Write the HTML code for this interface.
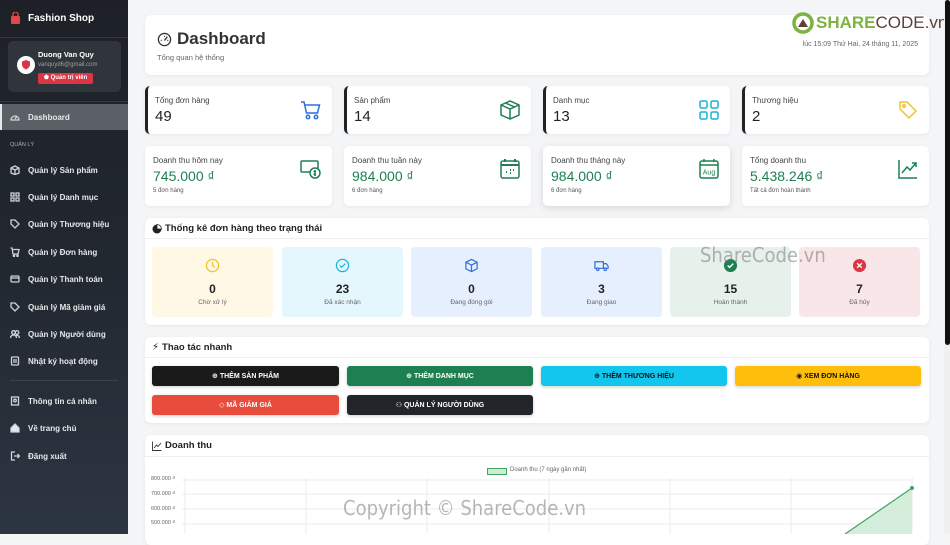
<!DOCTYPE html>
<html><head><meta charset="utf-8"><style>
*{box-sizing:border-box;margin:0;padding:0}
body{width:950px;height:534px;overflow:hidden;background:#f4f5f7;font-family:"Liberation Sans","DejaVu Sans",sans-serif;position:relative;color:#212529}
.sb{position:absolute;left:0;top:0;width:128px;height:534px;background:linear-gradient(180deg,#1d2127 0%,#222830 50%,#2c3542 100%);color:#fff}
.abs{position:absolute}
.card{position:absolute;background:#fff;border-radius:6px;box-shadow:0 1px 4px rgba(0,0,0,.06)}
.nav{position:absolute;left:10px;font-size:8px;font-weight:bold;color:#e6e8eb;display:flex;align-items:center}
.nav svg{width:10px;height:10px;margin-right:8px;stroke:#cfd3d8;fill:none;stroke-width:1.3}
.st{position:absolute;width:187px;height:48px;background:#fff;border-radius:5px;border-left:3px solid #222;box-shadow:0 1px 4px rgba(0,0,0,.06)}
.st .l{position:absolute;left:7px;top:10px;font-size:8px;color:#444}
.st .v{position:absolute;left:7px;top:22px;font-size:15px;color:#222}
.st svg{position:absolute;right:10px;top:13px;width:22px;height:22px;fill:none;stroke-width:1.5}
.rv{position:absolute;width:187px;height:60px;background:#fff;border-radius:5px;box-shadow:0 1px 4px rgba(0,0,0,.06)}
.rv .l{position:absolute;left:8px;top:10px;font-size:8px;color:#444}
.rv .v{position:absolute;left:8px;top:22px;font-size:14px;color:#1e8052}
.rv .s{position:absolute;left:8px;top:42px;font-size:6px;color:#555}
.rv svg{position:absolute;right:10px;top:12px;width:22px;height:22px;fill:none;stroke:#1e8052;stroke-width:1.5}
.bx{position:absolute;top:247px;width:121px;height:70px;border-radius:4px;text-align:center}
.bx svg{position:absolute;left:53px;top:11px;width:15px;height:15px;fill:none;stroke-width:1.3}
.bx .n{position:absolute;left:0;right:0;top:35px;font-size:12px;font-weight:bold;color:#222}
.bx .t{position:absolute;left:0;right:0;top:52px;font-size:6.5px;color:#666}
.btn{position:absolute;width:187px;height:20px;border-radius:3px;color:#fff;font-size:7px;font-weight:bold;display:flex;align-items:center;justify-content:center;box-shadow:0 1px 3px rgba(0,0,0,.2)}
.h{position:absolute;font-size:10px;color:#222;display:flex;align-items:center}
.line{position:absolute;height:1px;background:#eceef0}
.yl{position:absolute;left:151px;font-size:5.5px;color:#666}
.wm{position:absolute;font-size:20px;color:rgba(110,110,110,.5);font-family:"DejaVu Sans Condensed","Liberation Sans Narrow","Liberation Sans",sans-serif}
</style></head><body>
<div class="sb">
 <div class="abs" style="left:10px;top:12px;display:flex;align-items:center;font-weight:bold;font-size:10px"><svg width="11" height="12" viewBox="0 0 11 12"><rect x="1" y="4" width="9" height="8" rx="1" fill="#e34848"/><path d="M3 4V2.5a2.5 2.5 0 0 1 5 0V4" stroke="#e34848" fill="none" stroke-width="1.3"/></svg><span style="margin-left:7px">Fashion Shop</span></div>
 <div class="abs" style="left:0;top:37px;width:128px;height:1px;background:#333a43"></div>
 <div class="abs" style="left:8px;top:41px;width:113px;height:51px;background:#30353c;border-radius:5px">
  <div class="abs" style="left:9px;top:15px;width:18px;height:18px;border-radius:50%;background:#fff"><svg width="18" height="18" viewBox="0 0 18 18"><path d="M9 4l4 1.5v3c0 2.5-2 4-4 5-2-1-4-2.5-4-5v-3z" fill="#dc3545"/></svg></div>
  <div class="abs" style="left:30px;top:9px;font-size:7.5px;font-weight:bold">Duong Van Quy</div>
  <div class="abs" style="left:30px;top:21px;font-size:6px;color:#9aa0a8">vanquyd6@gmail.com</div>
  <div class="abs" style="left:30px;top:32px;width:55px;height:11px;background:#dc3545;border-radius:2px;font-size:6px;font-weight:bold;color:#fff;line-height:11px;text-align:center">⬟ Quản trị viên</div>
 </div>
 <div class="abs" style="left:0;top:101px;width:128px;height:1px;background:#333a43"></div>
 <div class="abs" style="left:0;top:104px;width:128px;height:26px;background:#5b5f66;border-left:2px solid #e8e8e8"></div>
 <div class="nav" style="top:112px"><svg viewBox="0 0 10 10"><path d="M1 8a4 4 0 1 1 8 0z"/><path d="M5 7l2-3"/></svg>Dashboard</div>
 <div class="abs" style="left:10px;top:142px;font-size:5.5px;color:#aab0b8">QUẢN LÝ</div>
 <div class="nav" style="top:165px"><svg viewBox="0 0 10 10"><path d="M1 3l4-2 4 2v5l-4 1.5L1 8z M1 3l4 2 4-2 M5 5v4.5"/></svg>Quản lý Sản phẩm</div>
 <div class="nav" style="top:192px"><svg viewBox="0 0 10 10"><rect x="1" y="1" width="3" height="3"/><rect x="6" y="1" width="3" height="3"/><rect x="1" y="6" width="3" height="3"/><rect x="6" y="6" width="3" height="3"/></svg>Quản lý Danh mục</div>
 <div class="nav" style="top:219px"><svg viewBox="0 0 10 10"><path d="M1 1h4l4 4-4 4-4-4z"/></svg>Quản lý Thương hiệu</div>
 <div class="nav" style="top:247px"><svg viewBox="0 0 10 10"><path d="M0.5 1h1.5l1 6h5l1-4.5H2.5"/><circle cx="4" cy="8.8" r=".7"/><circle cx="7.5" cy="8.8" r=".7"/></svg>Quản lý Đơn hàng</div>
 <div class="nav" style="top:274px"><svg viewBox="0 0 10 10"><rect x="1" y="2" width="8" height="6" rx="1"/><path d="M1 4h8"/></svg>Quản lý Thanh toán</div>
 <div class="nav" style="top:302px"><svg viewBox="0 0 10 10"><path d="M1 1h4l4 4-4 4-4-4z"/></svg>Quản lý Mã giảm giá</div>
 <div class="nav" style="top:329px"><svg viewBox="0 0 10 10"><circle cx="3.5" cy="3.5" r="1.8"/><circle cx="7" cy="3.5" r="1.8"/><path d="M0.5 9c0-2 1.5-3 3-3s3 1 3 3M6 6.2c2 0 3.5 1 3.5 2.8"/></svg>Quản lý Người dùng</div>
 <div class="nav" style="top:356px"><svg viewBox="0 0 10 10"><rect x="1.5" y="1" width="7" height="8" rx="1"/><path d="M3 4h4M3 6h4"/></svg>Nhật ký hoạt động</div>
 <div class="abs" style="left:10px;top:380px;width:108px;height:1px;background:#3a414a"></div>
 <div class="nav" style="top:396px"><svg viewBox="0 0 10 10"><rect x="1.5" y="1" width="7" height="8"/><circle cx="5" cy="4.5" r="1.3"/></svg>Thông tin cá nhân</div>
 <div class="nav" style="top:423px"><svg viewBox="0 0 10 10" style="fill:#e6e8eb"><path d="M1 5l4-4 4 4v4H1z"/></svg>Về trang chủ</div>
 <div class="nav" style="top:451px"><svg viewBox="0 0 10 10"><path d="M5 1H1.5v8H5M4 5h5.5M7.5 3l2 2-2 2"/></svg>Đăng xuất</div>
</div>

<div class="card" style="left:145px;top:15px;width:784px;height:60px">
 <div class="abs" style="left:12px;top:14px;display:flex;align-items:center;font-size:17px;font-weight:bold;color:#333"><svg width="15" height="15" viewBox="0 0 16 16" fill="none" stroke="#333" stroke-width="1.4"><circle cx="8" cy="8" r="6.5"/><path d="M8 9l3-4M4 9h1M11 9h1M8 4v1"/></svg><span style="margin-left:5px">Dashboard</span></div>
 <div class="abs" style="left:12px;top:38px;font-size:7.5px;color:#666">Tổng quan hệ thống</div>
 <div class="abs" style="right:11px;top:26px;font-size:7px;color:#666">lúc 15:09 Thứ Hai, 24 tháng 11, 2025</div>
</div>
<div class="abs" style="left:792px;top:12px;display:flex;align-items:center"><svg width="22" height="22" viewBox="0 0 22 22"><circle cx="11" cy="11" r="9" fill="none" stroke="#7cb342" stroke-width="3.5"/><path d="M6 15l5-8 5 8z" fill="#5d4037"/></svg><span style="font-size:17px;font-weight:bold;color:#7cb342;margin-left:2px">SHARE</span><span style="font-size:17px;color:#5d4037">CODE.vn</span></div>

<div class="st" style="left:145px;top:86px"><div class="l">Tổng đơn hàng</div><div class="v">49</div><svg viewBox="0 0 22 22" stroke="#2f6fdc"><path d="M1 3h3l2.5 11h11l2-8H5"/><circle cx="8" cy="18" r="1.7"/><circle cx="16" cy="18" r="1.7"/></svg></div>
<div class="st" style="left:344px;top:86px"><div class="l">Sản phẩm</div><div class="v">14</div><svg viewBox="0 0 22 22" stroke="#1e8052"><path d="M2 6l9-4 9 4v10l-9 4-9-4z M2 6l9 4 9-4 M11 10v10 M6.5 4l9 4"/></svg></div>
<div class="st" style="left:543px;top:86px"><div class="l">Danh mục</div><div class="v">13</div><svg viewBox="0 0 22 22" stroke="#17b3d6"><rect x="2" y="2" width="7" height="7" rx="1.5"/><rect x="13" y="2" width="7" height="7" rx="1.5"/><rect x="2" y="13" width="7" height="7" rx="1.5"/><rect x="13" y="13" width="7" height="7" rx="1.5"/></svg></div>
<div class="st" style="left:742px;top:86px"><div class="l">Thương hiệu</div><div class="v">2</div><svg viewBox="0 0 22 22" stroke="#f2c12e"><path d="M3 3h7l9 9-7 7-9-9z"/><circle cx="7" cy="7" r="1.3"/></svg></div>

<div class="rv" style="left:145px;top:146px"><div class="l">Doanh thu hôm nay</div><div class="v">745.000 ₫</div><div class="s">5 đơn hàng</div><svg viewBox="0 0 22 22"><rect x="1" y="3" width="17" height="11" rx="1"/><circle cx="15" cy="15" r="5" fill="#fff"/><path d="M15 12v6M13.5 13.5h2.5M13.5 16.5h2.5"/></svg></div>
<div class="rv" style="left:344px;top:146px"><div class="l">Doanh thu tuần này</div><div class="v">984.000 ₫</div><div class="s">6 đơn hàng</div><svg viewBox="0 0 22 22"><rect x="2" y="3" width="18" height="17" rx="2"/><path d="M2 7h18M6 1v3M16 1v3M7 14h1M11 12h1M14 12h1M11 15h1" stroke-width="2"/></svg></div>
<div class="rv" style="left:543px;top:146px;box-shadow:0 2px 8px rgba(0,0,0,.12)"><div class="l">Doanh thu tháng này</div><div class="v">984.000 ₫</div><div class="s">6 đơn hàng</div><svg viewBox="0 0 22 22"><rect x="2" y="3" width="18" height="17" rx="2"/><path d="M2 7h18M6 1v3M16 1v3"/><text x="11" y="16.5" font-size="7" text-anchor="middle" fill="#1e8052" stroke="none" font-family="Liberation Sans">Aug</text></svg></div>
<div class="rv" style="left:742px;top:146px"><div class="l">Tổng doanh thu</div><div class="v">5.438.246 ₫</div><div class="s">Tất cả đơn hoàn thành</div><svg viewBox="0 0 22 22"><path d="M2 2v18h18M5 15l5-6 3 3 6-7M15 5h4v4"/></svg></div>

<div class="card" style="left:145px;top:218px;width:784px;height:107px"></div>
<div class="h" style="left:152px;top:223px;font-weight:bold;font-size:9.5px"><svg width="10" height="10" viewBox="0 0 10 10"><circle cx="5" cy="5" r="4.5" fill="#222"/><path d="M5 5V0.5A4.5 4.5 0 0 1 9.5 5z" fill="#fff" stroke="#222" stroke-width=".8"/></svg><span style="margin-left:3px">Thống kê đơn hàng theo trạng thái</span></div>
<div class="line" style="left:145px;top:238px;width:784px"></div>
<div class="bx" style="left:152px;background:#fff8e5"><svg viewBox="0 0 16 16" stroke="#f2c12e"><circle cx="8" cy="8" r="6.5"/><path d="M8 4v4l2.5 2"/></svg><div class="n">0</div><div class="t">Chờ xử lý</div></div>
<div class="bx" style="left:282px;background:#e4f7fc"><svg viewBox="0 0 16 16" stroke="#17b3d6"><circle cx="8" cy="8" r="6.5"/><path d="M5 8l2 2 4-4"/></svg><div class="n">23</div><div class="t">Đã xác nhận</div></div>
<div class="bx" style="left:411px;background:#e6effd"><svg viewBox="0 0 16 16" stroke="#2f6fdc"><path d="M2 4.5l6-3 6 3v7l-6 3-6-3z M2 4.5l6 3 6-3 M8 7.5v7"/></svg><div class="n">0</div><div class="t">Đang đóng gói</div></div>
<div class="bx" style="left:541px;background:#e6effd"><svg viewBox="0 0 16 16" stroke="#2f6fdc"><path d="M1 4h9v7H1z M10 6h3l2 2.5V11h-5"/><circle cx="4" cy="12" r="1.3" fill="#fff"/><circle cx="12" cy="12" r="1.3" fill="#fff"/></svg><div class="n">3</div><div class="t">Đang giao</div></div>
<div class="bx" style="left:670px;background:#e7f1eb"><svg viewBox="0 0 16 16"><circle cx="8" cy="8" r="7" fill="#1e8052"/><path d="M5 8l2 2 4-4" stroke="#fff" stroke-width="1.6"/></svg><div class="n">15</div><div class="t">Hoàn thành</div></div>
<div class="bx" style="left:799px;background:#f9e6e8"><svg viewBox="0 0 16 16"><circle cx="8" cy="8" r="7" fill="#dc3545"/><path d="M5.5 5.5l5 5M10.5 5.5l-5 5" stroke="#fff" stroke-width="1.4"/></svg><div class="n">7</div><div class="t">Đã hủy</div></div>
<div class="wm" style="left:700px;top:243px">ShareCode.vn</div>

<div class="card" style="left:145px;top:337px;width:784px;height:86px"></div>
<div class="h" style="left:152px;top:342px;font-weight:bold;font-size:9.5px"><span style="font-size:10px">⚡</span><span style="margin-left:3px">Thao tác nhanh</span></div>
<div class="line" style="left:145px;top:357px;width:784px"></div>
<div class="btn" style="left:152px;top:366px;background:#1a1a1a">⊕ THÊM SẢN PHẨM</div>
<div class="btn" style="left:347px;top:366px;background:#1e8052;width:186px">⊕ THÊM DANH MỤC</div>
<div class="btn" style="left:541px;top:366px;background:#13c6ee;width:186px;color:#111">⊕ THÊM THƯƠNG HIỆU</div>
<div class="btn" style="left:735px;top:366px;background:#fdbf0b;width:186px;color:#111">◉ XEM ĐƠN HÀNG</div>
<div class="btn" style="left:152px;top:395px;background:#e74c3c">◇ MÃ GIẢM GIÁ</div>
<div class="btn" style="left:347px;top:395px;background:#22262b;width:186px">⚇ QUẢN LÝ NGƯỜI DÙNG</div>

<div class="card" style="left:145px;top:435px;width:784px;height:110px"></div>
<div class="h" style="left:152px;top:440px;font-size:9.5px;font-weight:bold"><svg width="10" height="10" viewBox="0 0 10 10" fill="none" stroke="#333" stroke-width=".9"><path d="M.5 .5v9h9M2 7l2.5-3 1.5 1.5 3-3.5"/></svg><span style="margin-left:3px">Doanh thu</span></div>
<div class="line" style="left:145px;top:456px;width:784px"></div>
<div class="abs" style="left:487px;top:468px;width:20px;height:7px;background:#cdebd5;border:1.3px solid #3ea45e"></div>
<div class="abs" style="left:510px;top:467px;font-size:6px;color:#666">Doanh thu (7 ngày gần nhất)</div>
<div class="yl" style="top:476px">800.000 ₫</div>
<div class="yl" style="top:491px">700.000 ₫</div>
<div class="yl" style="top:506px">600.000 ₫</div>
<div class="yl" style="top:520px">500.000 ₫</div>
<svg class="abs" style="left:0;top:0" width="950" height="534">
 <g stroke="#e9ebed" stroke-width="1">
  <path d="M182 480H913M182 494H913M182 509H913M182 524H913"/>
  <path d="M185 478V534M306 478V534M427 478V534M549 478V534M670 478V534M791 478V534M912 478V534"/>
 </g>
 <path d="M845 534L912 488V534z" fill="#d4eedb"/>
 <path d="M845 534L912 488" stroke="#3ea45e" stroke-width="1.2" fill="none"/>
 <circle cx="912" cy="488" r="2" fill="#3ea45e"/>
</svg>
<div class="wm" style="left:343px;top:496px">Copyright © ShareCode.vn</div>

<div class="abs" style="left:944px;top:0;width:6px;height:534px;background:#f0f0f0"></div>
<div class="abs" style="left:945px;top:0;width:5px;height:345px;background:#111;border-radius:3px"></div>
</body></html>
